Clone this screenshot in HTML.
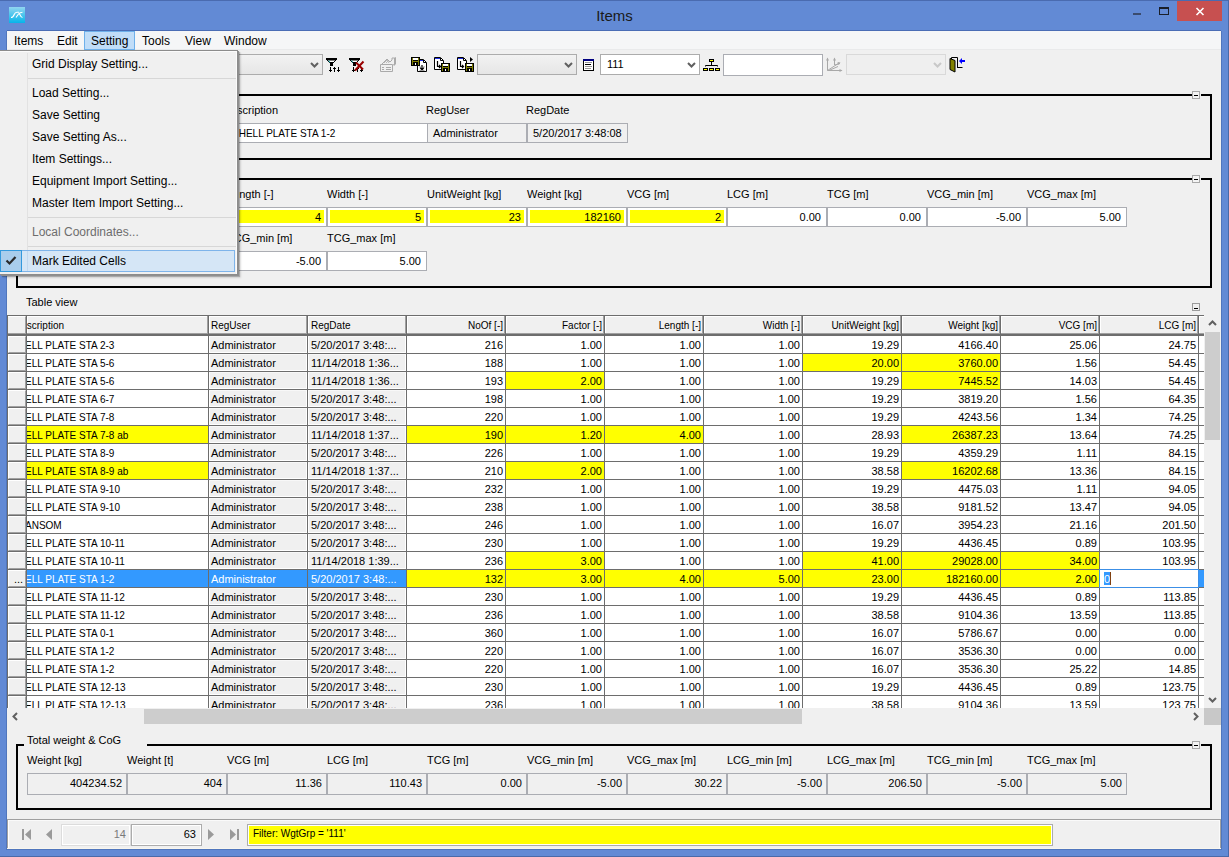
<!DOCTYPE html><html><head><meta charset="utf-8"><style>
html,body{margin:0;padding:0;}
body{width:1229px;height:857px;overflow:hidden;position:relative;background:#628ad5;font-family:"Liberation Sans", sans-serif;}
div{position:absolute;box-sizing:border-box;}
.t{white-space:pre;}
svg{position:absolute;}

</style></head><body>
<div style="left:0px;top:0px;width:1229px;height:1px;background:#4a6bb0"></div>
<div style="left:7px;top:31px;width:1214px;height:818px;background:#f0f0f0"></div>
<div style="left:9px;top:7px;width:16px;height:16px;background:linear-gradient(#92d5f0,#05b5ea)"></div>
<svg style="left:9px;top:7px" width="16" height="16" viewBox="0 0 16 16"><path d="M2 10.5 C4 10.5 4.5 9.5 5.2 7.5 C5.8 5.8 6.5 5.3 8 5.3 H10 M7 10.5 L9.5 7 C10.5 5.8 11.5 5.3 13.5 5.3 M10 6 C11 7.5 11.5 10.5 13.5 10.5" stroke="#fff" stroke-width="1.1" fill="none"/></svg>
<div class="t" style="left:0;width:1229px;top:5.6px;text-align:center;font-size:15px;line-height:20px;color:#1a1a1a">Items</div>
<div style="left:1133px;top:13px;width:8px;height:2px;background:#3a4b6e"></div>
<div style="left:1159px;top:7px;width:10px;height:8px;border:1px solid #1a1f2a;border-top-width:2px"></div>
<div style="left:1177px;top:1px;width:45px;height:20px;background:#c75050"></div>
<svg style="left:1177px;top:1px" width="45" height="20"><path d="M19.5 7 L26.5 14 M26.5 7 L19.5 14" stroke="#fff" stroke-width="1.6"/></svg>
<div style="left:7px;top:31px;width:1214px;height:19px;background:#f5f6f7"></div>
<div style="left:7px;top:30px;width:1214px;height:1px;background:#4a6db5"></div>
<div style="left:7px;top:49px;width:1214px;height:1px;background:#e9eaeb"></div>
<div style="left:84px;top:31px;width:51px;height:19px;background:#c0ddf8;border:1px solid #6eb0ea"></div>
<div class="t" style="left:14px;top:34.94px;font-size:12px;line-height:13.80px;color:#000;">Items</div>
<div class="t" style="left:57px;top:34.94px;font-size:12px;line-height:13.80px;color:#000;">Edit</div>
<div class="t" style="left:91px;top:34.94px;font-size:12px;line-height:13.80px;color:#000;">Setting</div>
<div class="t" style="left:142px;top:34.94px;font-size:12px;line-height:13.80px;color:#000;">Tools</div>
<div class="t" style="left:185px;top:34.94px;font-size:12px;line-height:13.80px;color:#000;">View</div>
<div class="t" style="left:224px;top:34.94px;font-size:12px;line-height:13.80px;color:#000;">Window</div>
<div style="left:150px;top:54px;width:173px;height:21px;background:linear-gradient(#f2f2f2,#e6e6e6);border:1px solid #acacac"></div>
<svg style="left:310px;top:62px" width="9" height="7"><path d="M1 1 L4.5 4.5 L8 1" stroke="#606060" stroke-width="2" fill="none"/></svg>
<svg style="left:326px;top:57px" width="16" height="16" viewBox="0 0 16 16"><path d="M0 1 H11 V3 H0 Z" fill="#000"/><path d="M1 3 L4.5 6.5 V8.5 H6.5 V6.5 L10 3 Z" fill="#fff" stroke="#000" stroke-width="1"/><path d="M2.5 3.5 L5 6.5" stroke="#3cc" stroke-width="1"/><rect x="4" y="5" width="3" height="4" fill="#000"/><rect x="4" y="10" width="1" height="3" fill="#000"/><rect x="3" y="13" width="3" height="1" fill="#000"/><rect x="4" y="14" width="1" height="1" fill="#000"/><rect x="8" y="10" width="1" height="1" fill="#000"/><rect x="7" y="11" width="3" height="1" fill="#000"/><rect x="8" y="12" width="1" height="3" fill="#000"/><rect x="12" y="10" width="1" height="3" fill="#000"/><rect x="11" y="13" width="3" height="1" fill="#000"/><rect x="12" y="14" width="1" height="1" fill="#000"/></svg>
<svg style="left:349px;top:57px" width="17" height="16" viewBox="0 0 17 16"><path d="M0 1 H11 V3 H0 Z" fill="#000"/><path d="M1 3 L4.5 6.5 V8.5 H6.5 V6.5 L10 3 Z" fill="#fff" stroke="#000" stroke-width="1"/><path d="M2.5 3.5 L5 6.5" stroke="#3cc" stroke-width="1"/><rect x="4" y="5" width="3" height="4" fill="#000"/><rect x="4" y="10" width="1" height="3" fill="#000"/><rect x="3" y="13" width="3" height="1" fill="#000"/><rect x="4" y="14" width="1" height="1" fill="#000"/><rect x="8" y="10" width="1" height="1" fill="#000"/><rect x="7" y="11" width="3" height="1" fill="#000"/><rect x="8" y="12" width="1" height="3" fill="#000"/><rect x="12" y="10" width="1" height="3" fill="#000"/><rect x="11" y="13" width="3" height="1" fill="#000"/><rect x="12" y="14" width="1" height="1" fill="#000"/><path d="M6 13.5 L14.5 4.5 M7 5.5 L14 12.5" stroke="#990000" stroke-width="2"/></svg>
<svg style="left:380px;top:57px" width="17" height="16" viewBox="0 0 17 16"><path d="M0.5 7.5 H12.5 V14.5 H0.5 Z" fill="#f0f0f0" stroke="#aaa"/><path d="M2 10.5 H4 M6 10.5 H11 M2 12.5 H4 M6 12.5 H11" stroke="#aaa"/><path d="M2 7 L7 2 L10 5 L12 3 V1 H14.5 V7 L12 9" stroke="#aaa" fill="none"/><path d="M4 6 L7 3 L9 6 M6 6 L8 4" stroke="#bbb" fill="none"/><path d="M14 1 L16 0 V7 L14 9 Z" fill="#aaa"/></svg>
<svg style="left:411px;top:57px" width="17" height="16"><path d="M6.5 2.5 H12.5 L15.5 5.5 V14.5 H6.5 Z" fill="#fff" stroke="#000"/><rect x="7" y="3" width="6" height="1" fill="#1f2fe0"/><path d="M12.5 3 V5.5 H15" stroke="#000" fill="none"/><rect x="0.5" y="0.5" width="8" height="8" fill="#808000" stroke="#000"/><rect x="2" y="1" width="5" height="2" fill="#fff"/><rect x="2" y="3" width="5" height="1" fill="#000"/><rect x="2" y="5" width="5" height="4" fill="#000"/><rect x="4" y="6" width="1" height="2" fill="#fff"/><path d="M11 8 V12 M9 10.5 L11 13 L13 10.5" stroke="#000" stroke-width="1.2" fill="none"/><path d="M8.5 9.5 H9.5 M12.5 9.5 H13.5 M8.5 13.5 H13.5" stroke="#999"/></svg>
<svg style="left:434px;top:57px" width="17" height="16"><path d="M0.5 0.5 H6.5 L9.5 3.5 V12.5 H0.5 Z" fill="#fff" stroke="#000"/><rect x="1" y="1" width="6" height="1" fill="#1f2fe0"/><path d="M6.5 1 V3.5 H9" stroke="#000" fill="none"/><path d="M3.5 4 V9.5 H6 M5 8 L6.5 9.5 L5 11" stroke="#000" stroke-width="1.2" fill="none"/><rect x="7.5" y="6.5" width="8" height="8" fill="#808000" stroke="#000"/><rect x="9" y="7" width="5" height="2" fill="#fff"/><rect x="9" y="9" width="5" height="1" fill="#000"/><rect x="9" y="11" width="5" height="4" fill="#000"/><rect x="11" y="12" width="1" height="2" fill="#fff"/></svg>
<svg style="left:457px;top:57px" width="17" height="16"><path d="M0.5 0.5 H6.5 L9.5 3.5 V12.5 H0.5 Z" fill="#fff" stroke="#000"/><rect x="1" y="1" width="6" height="1" fill="#1f2fe0"/><path d="M6.5 1 V3.5 H9" stroke="#000" fill="none"/><path d="M3.5 4 V9.5 H6 M5 8 L6.5 9.5 L5 11" stroke="#000" stroke-width="1.2" fill="none"/><rect x="8.5" y="6.5" width="8" height="8" fill="#808000" stroke="#000"/><rect x="10" y="7" width="5" height="2" fill="#fff"/><rect x="10" y="9" width="5" height="1" fill="#000"/><rect x="10" y="11" width="5" height="4" fill="#000"/><rect x="12" y="12" width="1" height="2" fill="#fff"/><path d="M13 0 L16 2.5 L13 5 Z" fill="#000"/></svg>
<div style="left:477px;top:54px;width:100px;height:21px;background:linear-gradient(#f2f2f2,#e6e6e6);border:1px solid #acacac"></div>
<svg style="left:564px;top:62px" width="9" height="7"><path d="M1 1 L4.5 4.5 L8 1" stroke="#606060" stroke-width="2" fill="none"/></svg>
<svg style="left:583px;top:59px" width="11" height="12"><rect x="0.5" y="0.5" width="10" height="11" fill="#fff" stroke="#000"/><rect x="0" y="0" width="11" height="2" fill="#000080"/><path d="M2 3.5 H9 M2 7.5 H9 M2 9.5 H8" stroke="#999"/><path d="M2 5.5 H8" stroke="#000"/></svg>
<div style="left:600px;top:54px;width:100px;height:21px;background:#fff;border:1px solid #acacac"></div>
<svg style="left:687px;top:62px" width="9" height="7"><path d="M1 1 L4.5 4.5 L8 1" stroke="#606060" stroke-width="2" fill="none"/></svg>
<div class="t" style="left:607px;top:57.86px;font-size:11px;line-height:12.65px;color:#000;">111</div>
<svg style="left:703px;top:59px" width="17" height="12"><rect x="6.5" y="0.5" width="4" height="2" fill="#ff0" stroke="#000"/><path d="M8.5 3 V6.5 M2.5 7.5 V6.5 H14.5 V7.5" stroke="#000" fill="none"/><rect x="0.5" y="9.5" width="4" height="2" fill="#ff0" stroke="#000"/><rect x="6.5" y="9.5" width="4" height="2" fill="#ff0" stroke="#000"/><rect x="12.5" y="9.5" width="4" height="2" fill="#ff0" stroke="#000"/></svg>
<div style="left:723px;top:54px;width:100px;height:22px;background:#fff;border:1px solid #abadb3"></div>
<svg style="left:826px;top:57px" width="17" height="16"><path d="M1.5 1.5 V13.5 H15.5 M8.5 1.5 V8 M1.5 13.5 L13 6 M4 13 L12 9.5 M9 8 L14 6.5" stroke="#a8a8a8" stroke-width="1" fill="none"/><path d="M0 3.5 L1.5 0.5 L3 3.5 Z M7 3.5 L8.5 0.5 L10 3.5 Z M13.5 12 L16.5 13.5 L13.5 15 Z M11.5 5 L14.5 5.5 L12.5 8 Z" fill="#a8a8a8"/></svg>
<div style="left:846px;top:54px;width:100px;height:21px;background:#efefef;border:1px solid #d9d9d9"></div>
<svg style="left:933px;top:62px" width="9" height="7"><path d="M1 1 L4.5 4.5 L8 1" stroke="#c8c8c8" stroke-width="2" fill="none"/></svg>
<svg style="left:949px;top:57px" width="17" height="16"><path d="M2.5 10.5 V0.5 H8.5 V10.5 M8 10.5 H13.5" fill="none" stroke="#000"/><path d="M1 1.5 L6 3.5 V15 L1 12.5 Z" fill="#808000" stroke="#000" stroke-width="1"/><path d="M10 4 L13 1 V3 H16 V5 H13 V7 Z" fill="#0000ff"/></svg>
<div style="left:16px;top:94px;width:2px;height:66px;background:#000"></div>
<div style="left:1210px;top:94px;width:2px;height:66px;background:#000"></div>
<div style="left:16px;top:158px;width:1196px;height:2px;background:#000"></div>
<div style="left:16px;top:94px;width:1176px;height:2px;background:#000"></div>
<div style="left:1201px;top:94px;width:11px;height:2px;background:#000"></div>
<div style="left:1192px;top:91px;width:8px;height:8px;background:#f4f4f4;border:1px solid #a8a8a8"></div>
<div style="left:1194px;top:95px;width:4px;height:1px;background:#000"></div>
<div class="t" style="left:223px;top:103.86px;font-size:11px;line-height:12.65px;color:#000;">Description</div>
<div class="t" style="left:426px;top:103.86px;font-size:11px;line-height:12.65px;color:#000;">RegUser</div>
<div class="t" style="left:526px;top:103.86px;font-size:11px;line-height:12.65px;color:#000;">RegDate</div>
<div style="left:200px;top:123px;width:228px;height:20px;background:#fff;border:1px solid #abadb3"></div>
<div class="t" style="left:232px;top:126.86px;font-size:11px;line-height:12.65px;color:#000;transform:scaleX(0.91);transform-origin:0 0">SHELL PLATE STA 1-2</div>
<div style="left:427px;top:123px;width:100px;height:20px;background:#f0f0f0;border:1px solid #abadb3"></div>
<div class="t" style="left:433px;top:126.86px;font-size:11px;line-height:12.65px;color:#000;">Administrator</div>
<div style="left:527px;top:123px;width:101px;height:20px;background:#f0f0f0;border:1px solid #abadb3"></div>
<div class="t" style="left:533px;top:126.86px;font-size:11px;line-height:12.65px;color:#000;">5/20/2017 3:48:08</div>
<div style="left:16px;top:178px;width:2px;height:110px;background:#000"></div>
<div style="left:1210px;top:178px;width:2px;height:110px;background:#000"></div>
<div style="left:16px;top:286px;width:1196px;height:2px;background:#000"></div>
<div style="left:16px;top:178px;width:1176px;height:2px;background:#000"></div>
<div style="left:1201px;top:178px;width:11px;height:2px;background:#000"></div>
<div style="left:1192px;top:175px;width:8px;height:8px;background:#f4f4f4;border:1px solid #a8a8a8"></div>
<div style="left:1194px;top:179px;width:4px;height:1px;background:#000"></div>
<div class="t" style="left:27px;top:187.86px;font-size:11px;line-height:12.65px;color:#000;">NoOf [-]</div>
<div style="left:27px;top:207px;width:100px;height:20px;background:#fff;border:1px solid #abadb3"></div>
<div style="left:30px;top:210px;width:94px;height:13px;background:#ff0"></div>
<div class="t" style="right:1108px;top:210.86px;font-size:11px;line-height:12.65px;color:#000;text-align:right;">132</div>
<div class="t" style="left:127px;top:187.86px;font-size:11px;line-height:12.65px;color:#000;">Factor [-]</div>
<div style="left:127px;top:207px;width:100px;height:20px;background:#fff;border:1px solid #abadb3"></div>
<div style="left:130px;top:210px;width:94px;height:13px;background:#ff0"></div>
<div class="t" style="right:1008px;top:210.86px;font-size:11px;line-height:12.65px;color:#000;text-align:right;">3</div>
<div class="t" style="left:227px;top:187.86px;font-size:11px;line-height:12.65px;color:#000;">Length [-]</div>
<div style="left:227px;top:207px;width:100px;height:20px;background:#fff;border:1px solid #abadb3"></div>
<div style="left:230px;top:210px;width:94px;height:13px;background:#ff0"></div>
<div class="t" style="right:908px;top:210.86px;font-size:11px;line-height:12.65px;color:#000;text-align:right;">4</div>
<div class="t" style="left:327px;top:187.86px;font-size:11px;line-height:12.65px;color:#000;">Width [-]</div>
<div style="left:327px;top:207px;width:100px;height:20px;background:#fff;border:1px solid #abadb3"></div>
<div style="left:330px;top:210px;width:94px;height:13px;background:#ff0"></div>
<div class="t" style="right:808px;top:210.86px;font-size:11px;line-height:12.65px;color:#000;text-align:right;">5</div>
<div class="t" style="left:427px;top:187.86px;font-size:11px;line-height:12.65px;color:#000;">UnitWeight [kg]</div>
<div style="left:427px;top:207px;width:100px;height:20px;background:#fff;border:1px solid #abadb3"></div>
<div style="left:430px;top:210px;width:94px;height:13px;background:#ff0"></div>
<div class="t" style="right:708px;top:210.86px;font-size:11px;line-height:12.65px;color:#000;text-align:right;">23</div>
<div class="t" style="left:527px;top:187.86px;font-size:11px;line-height:12.65px;color:#000;">Weight [kg]</div>
<div style="left:527px;top:207px;width:100px;height:20px;background:#fff;border:1px solid #abadb3"></div>
<div style="left:530px;top:210px;width:94px;height:13px;background:#ff0"></div>
<div class="t" style="right:608px;top:210.86px;font-size:11px;line-height:12.65px;color:#000;text-align:right;">182160</div>
<div class="t" style="left:627px;top:187.86px;font-size:11px;line-height:12.65px;color:#000;">VCG [m]</div>
<div style="left:627px;top:207px;width:100px;height:20px;background:#fff;border:1px solid #abadb3"></div>
<div style="left:630px;top:210px;width:94px;height:13px;background:#ff0"></div>
<div class="t" style="right:508px;top:210.86px;font-size:11px;line-height:12.65px;color:#000;text-align:right;">2</div>
<div class="t" style="left:727px;top:187.86px;font-size:11px;line-height:12.65px;color:#000;">LCG [m]</div>
<div style="left:727px;top:207px;width:100px;height:20px;background:#fff;border:1px solid #abadb3"></div>
<div class="t" style="right:408px;top:210.86px;font-size:11px;line-height:12.65px;color:#000;text-align:right;">0.00</div>
<div class="t" style="left:827px;top:187.86px;font-size:11px;line-height:12.65px;color:#000;">TCG [m]</div>
<div style="left:827px;top:207px;width:100px;height:20px;background:#fff;border:1px solid #abadb3"></div>
<div class="t" style="right:308px;top:210.86px;font-size:11px;line-height:12.65px;color:#000;text-align:right;">0.00</div>
<div class="t" style="left:927px;top:187.86px;font-size:11px;line-height:12.65px;color:#000;">VCG_min [m]</div>
<div style="left:927px;top:207px;width:100px;height:20px;background:#fff;border:1px solid #abadb3"></div>
<div class="t" style="right:208px;top:210.86px;font-size:11px;line-height:12.65px;color:#000;text-align:right;">-5.00</div>
<div class="t" style="left:1027px;top:187.86px;font-size:11px;line-height:12.65px;color:#000;">VCG_max [m]</div>
<div style="left:1027px;top:207px;width:100px;height:20px;background:#fff;border:1px solid #abadb3"></div>
<div class="t" style="right:108px;top:210.86px;font-size:11px;line-height:12.65px;color:#000;text-align:right;">5.00</div>
<div class="t" style="left:27px;top:231.86px;font-size:11px;line-height:12.65px;color:#000;">LCG_min [m]</div>
<div style="left:27px;top:251px;width:100px;height:20px;background:#fff;border:1px solid #abadb3"></div>
<div class="t" style="right:1108px;top:254.86px;font-size:11px;line-height:12.65px;color:#000;text-align:right;">-5.00</div>
<div class="t" style="left:127px;top:231.86px;font-size:11px;line-height:12.65px;color:#000;">LCG_max [m]</div>
<div style="left:127px;top:251px;width:100px;height:20px;background:#fff;border:1px solid #abadb3"></div>
<div class="t" style="right:1008px;top:254.86px;font-size:11px;line-height:12.65px;color:#000;text-align:right;">206.50</div>
<div class="t" style="left:227px;top:231.86px;font-size:11px;line-height:12.65px;color:#000;">TCG_min [m]</div>
<div style="left:227px;top:251px;width:100px;height:20px;background:#fff;border:1px solid #abadb3"></div>
<div class="t" style="right:908px;top:254.86px;font-size:11px;line-height:12.65px;color:#000;text-align:right;">-5.00</div>
<div class="t" style="left:327px;top:231.86px;font-size:11px;line-height:12.65px;color:#000;">TCG_max [m]</div>
<div style="left:327px;top:251px;width:100px;height:20px;background:#fff;border:1px solid #abadb3"></div>
<div class="t" style="right:808px;top:254.86px;font-size:11px;line-height:12.65px;color:#000;text-align:right;">5.00</div>
<div class="t" style="left:26px;top:295.86px;font-size:11px;line-height:12.65px;color:#000;">Table view</div>
<div style="left:1192px;top:303px;width:8px;height:8px;background:#f0f0f0;border:1px solid #9b9b9b"></div>
<div style="left:1194px;top:308px;width:4px;height:1px;background:#000"></div>
<div style="left:7px;top:315px;width:1197px;height:393px;overflow:hidden;background:#fff">
<div style="left:0px;top:0px;width:1197px;height:20px;background:#f0f0f0"></div>
<div style="left:0px;top:0px;width:1197px;height:1px;background:#6d6d6d"></div>
<div style="left:1px;top:1px;width:18px;height:1px;background:#fff"></div>
<div style="left:1px;top:1px;width:1px;height:17px;background:#fff"></div>
<div style="left:18px;top:1px;width:1px;height:17px;background:#a0a0a0"></div>
<div style="left:20px;top:1px;width:181px;height:1px;background:#fff"></div>
<div style="left:20px;top:1px;width:1px;height:17px;background:#fff"></div>
<div style="left:200px;top:1px;width:1px;height:17px;background:#a0a0a0"></div>
<div style="left:202px;top:1px;width:98px;height:1px;background:#fff"></div>
<div style="left:202px;top:1px;width:1px;height:17px;background:#fff"></div>
<div style="left:299px;top:1px;width:1px;height:17px;background:#a0a0a0"></div>
<div style="left:301px;top:1px;width:98px;height:1px;background:#fff"></div>
<div style="left:301px;top:1px;width:1px;height:17px;background:#fff"></div>
<div style="left:398px;top:1px;width:1px;height:17px;background:#a0a0a0"></div>
<div style="left:400px;top:1px;width:98px;height:1px;background:#fff"></div>
<div style="left:400px;top:1px;width:1px;height:17px;background:#fff"></div>
<div style="left:497px;top:1px;width:1px;height:17px;background:#a0a0a0"></div>
<div style="left:499px;top:1px;width:98px;height:1px;background:#fff"></div>
<div style="left:499px;top:1px;width:1px;height:17px;background:#fff"></div>
<div style="left:596px;top:1px;width:1px;height:17px;background:#a0a0a0"></div>
<div style="left:598px;top:1px;width:98px;height:1px;background:#fff"></div>
<div style="left:598px;top:1px;width:1px;height:17px;background:#fff"></div>
<div style="left:695px;top:1px;width:1px;height:17px;background:#a0a0a0"></div>
<div style="left:697px;top:1px;width:98px;height:1px;background:#fff"></div>
<div style="left:697px;top:1px;width:1px;height:17px;background:#fff"></div>
<div style="left:794px;top:1px;width:1px;height:17px;background:#a0a0a0"></div>
<div style="left:796px;top:1px;width:98px;height:1px;background:#fff"></div>
<div style="left:796px;top:1px;width:1px;height:17px;background:#fff"></div>
<div style="left:893px;top:1px;width:1px;height:17px;background:#a0a0a0"></div>
<div style="left:895px;top:1px;width:98px;height:1px;background:#fff"></div>
<div style="left:895px;top:1px;width:1px;height:17px;background:#fff"></div>
<div style="left:992px;top:1px;width:1px;height:17px;background:#a0a0a0"></div>
<div style="left:994px;top:1px;width:98px;height:1px;background:#fff"></div>
<div style="left:994px;top:1px;width:1px;height:17px;background:#fff"></div>
<div style="left:1091px;top:1px;width:1px;height:17px;background:#a0a0a0"></div>
<div style="left:1093px;top:1px;width:98px;height:1px;background:#fff"></div>
<div style="left:1093px;top:1px;width:1px;height:17px;background:#fff"></div>
<div style="left:1190px;top:1px;width:1px;height:17px;background:#a0a0a0"></div>
<div style="left:1192px;top:1px;width:12px;height:1px;background:#fff"></div>
<div style="left:1192px;top:1px;width:1px;height:17px;background:#fff"></div>
<div style="left:1203px;top:1px;width:1px;height:17px;background:#a0a0a0"></div>
<div style="left:0px;top:18px;width:1197px;height:1px;background:#a0a0a0"></div>
<div style="left:0px;top:19px;width:1197px;height:2px;background:#6d6d6d"></div>
<div style="left:19px;top:0px;width:1px;height:393px;background:#6d6d6d"></div>
<div style="left:201px;top:0px;width:1px;height:393px;background:#6d6d6d"></div>
<div style="left:300px;top:0px;width:1px;height:393px;background:#6d6d6d"></div>
<div style="left:399px;top:0px;width:1px;height:393px;background:#6d6d6d"></div>
<div style="left:498px;top:0px;width:1px;height:393px;background:#6d6d6d"></div>
<div style="left:597px;top:0px;width:1px;height:393px;background:#6d6d6d"></div>
<div style="left:696px;top:0px;width:1px;height:393px;background:#6d6d6d"></div>
<div style="left:795px;top:0px;width:1px;height:393px;background:#6d6d6d"></div>
<div style="left:894px;top:0px;width:1px;height:393px;background:#6d6d6d"></div>
<div style="left:993px;top:0px;width:1px;height:393px;background:#6d6d6d"></div>
<div style="left:1092px;top:0px;width:1px;height:393px;background:#6d6d6d"></div>
<div style="left:1191px;top:0px;width:1px;height:393px;background:#6d6d6d"></div>
<div style="left:0px;top:0px;width:1px;height:393px;background:#6d6d6d"></div>
<div class="t" style="left:204px;top:4.78px;font-size:10px;line-height:11.50px;color:#000;">RegUser</div>
<div class="t" style="left:304px;top:4.78px;font-size:10px;line-height:11.50px;color:#000;">RegDate</div>
<div class="t" style="right:701px;top:4.78px;font-size:10px;line-height:11.50px;color:#000;text-align:right;">NoOf [-]</div>
<div class="t" style="right:602px;top:4.78px;font-size:10px;line-height:11.50px;color:#000;text-align:right;">Factor [-]</div>
<div class="t" style="right:503px;top:4.78px;font-size:10px;line-height:11.50px;color:#000;text-align:right;">Length [-]</div>
<div class="t" style="right:404px;top:4.78px;font-size:10px;line-height:11.50px;color:#000;text-align:right;">Width [-]</div>
<div class="t" style="right:305px;top:4.78px;font-size:10px;line-height:11.50px;color:#000;text-align:right;">UnitWeight [kg]</div>
<div class="t" style="right:206px;top:4.78px;font-size:10px;line-height:11.50px;color:#000;text-align:right;">Weight [kg]</div>
<div class="t" style="right:107px;top:4.78px;font-size:10px;line-height:11.50px;color:#000;text-align:right;">VCG [m]</div>
<div class="t" style="right:8px;top:4.78px;font-size:10px;line-height:11.50px;color:#000;text-align:right;">LCG [m]</div>
<div class="t" style="left:7px;top:4.78px;font-size:10px;line-height:11.50px;color:#000;">Description</div>
<div style="left:0px;top:38px;width:1197px;height:1px;background:#6d6d6d"></div>
<div style="left:1px;top:21px;width:18px;height:17px;background:#f0f0f0;border-top:1px solid #fff;border-left:1px solid #fff"></div>
<div style="left:202px;top:21px;width:98px;height:17px;background:#f0f0f0;border:1px solid #fff;border-top-color:#f8f8f8"></div>
<div style="left:301px;top:21px;width:98px;height:17px;background:#f0f0f0;border:1px solid #fff;border-top-color:#f8f8f8"></div>
<div class="t" style="right:701px;top:23.86px;font-size:11px;line-height:12.65px;color:#000;text-align:right;">216</div>
<div class="t" style="right:602px;top:23.86px;font-size:11px;line-height:12.65px;color:#000;text-align:right;">1.00</div>
<div class="t" style="right:503px;top:23.86px;font-size:11px;line-height:12.65px;color:#000;text-align:right;">1.00</div>
<div class="t" style="right:404px;top:23.86px;font-size:11px;line-height:12.65px;color:#000;text-align:right;">1.00</div>
<div class="t" style="right:305px;top:23.86px;font-size:11px;line-height:12.65px;color:#000;text-align:right;">19.29</div>
<div class="t" style="right:206px;top:23.86px;font-size:11px;line-height:12.65px;color:#000;text-align:right;">4166.40</div>
<div class="t" style="right:107px;top:23.86px;font-size:11px;line-height:12.65px;color:#000;text-align:right;">25.06</div>
<div class="t" style="right:8px;top:23.86px;font-size:11px;line-height:12.65px;color:#000;text-align:right;">24.75</div>
<div class="t" style="left:18.2px;top:23.86px;font-size:11px;line-height:12.65px;color:#000;transform:scaleX(0.91);transform-origin:0 0">ELL PLATE STA 2-3</div>
<div class="t" style="left:204px;top:23.86px;font-size:11px;line-height:12.65px;color:#000;">Administrator</div>
<div class="t" style="left:304px;top:23.86px;font-size:11px;line-height:12.65px;color:#000;">5/20/2017 3:48:...</div>
<div style="left:0px;top:56px;width:1197px;height:1px;background:#6d6d6d"></div>
<div style="left:1px;top:39px;width:18px;height:17px;background:#f0f0f0;border-top:1px solid #fff;border-left:1px solid #fff"></div>
<div style="left:202px;top:39px;width:98px;height:17px;background:#f0f0f0;border:1px solid #fff;border-top-color:#f8f8f8"></div>
<div style="left:301px;top:39px;width:98px;height:17px;background:#f0f0f0;border:1px solid #fff;border-top-color:#f8f8f8"></div>
<div class="t" style="right:701px;top:41.86px;font-size:11px;line-height:12.65px;color:#000;text-align:right;">188</div>
<div class="t" style="right:602px;top:41.86px;font-size:11px;line-height:12.65px;color:#000;text-align:right;">1.00</div>
<div class="t" style="right:503px;top:41.86px;font-size:11px;line-height:12.65px;color:#000;text-align:right;">1.00</div>
<div class="t" style="right:404px;top:41.86px;font-size:11px;line-height:12.65px;color:#000;text-align:right;">1.00</div>
<div style="left:796px;top:39px;width:98px;height:17px;background:#ffff00"></div>
<div class="t" style="right:305px;top:41.86px;font-size:11px;line-height:12.65px;color:#000;text-align:right;">20.00</div>
<div style="left:895px;top:39px;width:98px;height:17px;background:#ffff00"></div>
<div class="t" style="right:206px;top:41.86px;font-size:11px;line-height:12.65px;color:#000;text-align:right;">3760.00</div>
<div class="t" style="right:107px;top:41.86px;font-size:11px;line-height:12.65px;color:#000;text-align:right;">1.56</div>
<div class="t" style="right:8px;top:41.86px;font-size:11px;line-height:12.65px;color:#000;text-align:right;">54.45</div>
<div class="t" style="left:18.2px;top:41.86px;font-size:11px;line-height:12.65px;color:#000;transform:scaleX(0.91);transform-origin:0 0">ELL PLATE STA 5-6</div>
<div class="t" style="left:204px;top:41.86px;font-size:11px;line-height:12.65px;color:#000;">Administrator</div>
<div class="t" style="left:304px;top:41.86px;font-size:11px;line-height:12.65px;color:#000;">11/14/2018 1:36...</div>
<div style="left:0px;top:74px;width:1197px;height:1px;background:#6d6d6d"></div>
<div style="left:1px;top:57px;width:18px;height:17px;background:#f0f0f0;border-top:1px solid #fff;border-left:1px solid #fff"></div>
<div style="left:202px;top:57px;width:98px;height:17px;background:#f0f0f0;border:1px solid #fff;border-top-color:#f8f8f8"></div>
<div style="left:301px;top:57px;width:98px;height:17px;background:#f0f0f0;border:1px solid #fff;border-top-color:#f8f8f8"></div>
<div class="t" style="right:701px;top:59.86px;font-size:11px;line-height:12.65px;color:#000;text-align:right;">193</div>
<div style="left:499px;top:57px;width:98px;height:17px;background:#ffff00"></div>
<div class="t" style="right:602px;top:59.86px;font-size:11px;line-height:12.65px;color:#000;text-align:right;">2.00</div>
<div class="t" style="right:503px;top:59.86px;font-size:11px;line-height:12.65px;color:#000;text-align:right;">1.00</div>
<div class="t" style="right:404px;top:59.86px;font-size:11px;line-height:12.65px;color:#000;text-align:right;">1.00</div>
<div class="t" style="right:305px;top:59.86px;font-size:11px;line-height:12.65px;color:#000;text-align:right;">19.29</div>
<div style="left:895px;top:57px;width:98px;height:17px;background:#ffff00"></div>
<div class="t" style="right:206px;top:59.86px;font-size:11px;line-height:12.65px;color:#000;text-align:right;">7445.52</div>
<div class="t" style="right:107px;top:59.86px;font-size:11px;line-height:12.65px;color:#000;text-align:right;">14.03</div>
<div class="t" style="right:8px;top:59.86px;font-size:11px;line-height:12.65px;color:#000;text-align:right;">54.45</div>
<div class="t" style="left:18.2px;top:59.86px;font-size:11px;line-height:12.65px;color:#000;transform:scaleX(0.91);transform-origin:0 0">ELL PLATE STA 5-6</div>
<div class="t" style="left:204px;top:59.86px;font-size:11px;line-height:12.65px;color:#000;">Administrator</div>
<div class="t" style="left:304px;top:59.86px;font-size:11px;line-height:12.65px;color:#000;">11/14/2018 1:36...</div>
<div style="left:0px;top:92px;width:1197px;height:1px;background:#6d6d6d"></div>
<div style="left:1px;top:75px;width:18px;height:17px;background:#f0f0f0;border-top:1px solid #fff;border-left:1px solid #fff"></div>
<div style="left:202px;top:75px;width:98px;height:17px;background:#f0f0f0;border:1px solid #fff;border-top-color:#f8f8f8"></div>
<div style="left:301px;top:75px;width:98px;height:17px;background:#f0f0f0;border:1px solid #fff;border-top-color:#f8f8f8"></div>
<div class="t" style="right:701px;top:77.86px;font-size:11px;line-height:12.65px;color:#000;text-align:right;">198</div>
<div class="t" style="right:602px;top:77.86px;font-size:11px;line-height:12.65px;color:#000;text-align:right;">1.00</div>
<div class="t" style="right:503px;top:77.86px;font-size:11px;line-height:12.65px;color:#000;text-align:right;">1.00</div>
<div class="t" style="right:404px;top:77.86px;font-size:11px;line-height:12.65px;color:#000;text-align:right;">1.00</div>
<div class="t" style="right:305px;top:77.86px;font-size:11px;line-height:12.65px;color:#000;text-align:right;">19.29</div>
<div class="t" style="right:206px;top:77.86px;font-size:11px;line-height:12.65px;color:#000;text-align:right;">3819.20</div>
<div class="t" style="right:107px;top:77.86px;font-size:11px;line-height:12.65px;color:#000;text-align:right;">1.56</div>
<div class="t" style="right:8px;top:77.86px;font-size:11px;line-height:12.65px;color:#000;text-align:right;">64.35</div>
<div class="t" style="left:18.2px;top:77.86px;font-size:11px;line-height:12.65px;color:#000;transform:scaleX(0.91);transform-origin:0 0">ELL PLATE STA 6-7</div>
<div class="t" style="left:204px;top:77.86px;font-size:11px;line-height:12.65px;color:#000;">Administrator</div>
<div class="t" style="left:304px;top:77.86px;font-size:11px;line-height:12.65px;color:#000;">5/20/2017 3:48:...</div>
<div style="left:0px;top:110px;width:1197px;height:1px;background:#6d6d6d"></div>
<div style="left:1px;top:93px;width:18px;height:17px;background:#f0f0f0;border-top:1px solid #fff;border-left:1px solid #fff"></div>
<div style="left:202px;top:93px;width:98px;height:17px;background:#f0f0f0;border:1px solid #fff;border-top-color:#f8f8f8"></div>
<div style="left:301px;top:93px;width:98px;height:17px;background:#f0f0f0;border:1px solid #fff;border-top-color:#f8f8f8"></div>
<div class="t" style="right:701px;top:95.86px;font-size:11px;line-height:12.65px;color:#000;text-align:right;">220</div>
<div class="t" style="right:602px;top:95.86px;font-size:11px;line-height:12.65px;color:#000;text-align:right;">1.00</div>
<div class="t" style="right:503px;top:95.86px;font-size:11px;line-height:12.65px;color:#000;text-align:right;">1.00</div>
<div class="t" style="right:404px;top:95.86px;font-size:11px;line-height:12.65px;color:#000;text-align:right;">1.00</div>
<div class="t" style="right:305px;top:95.86px;font-size:11px;line-height:12.65px;color:#000;text-align:right;">19.29</div>
<div class="t" style="right:206px;top:95.86px;font-size:11px;line-height:12.65px;color:#000;text-align:right;">4243.56</div>
<div class="t" style="right:107px;top:95.86px;font-size:11px;line-height:12.65px;color:#000;text-align:right;">1.34</div>
<div class="t" style="right:8px;top:95.86px;font-size:11px;line-height:12.65px;color:#000;text-align:right;">74.25</div>
<div class="t" style="left:18.2px;top:95.86px;font-size:11px;line-height:12.65px;color:#000;transform:scaleX(0.91);transform-origin:0 0">ELL PLATE STA 7-8</div>
<div class="t" style="left:204px;top:95.86px;font-size:11px;line-height:12.65px;color:#000;">Administrator</div>
<div class="t" style="left:304px;top:95.86px;font-size:11px;line-height:12.65px;color:#000;">5/20/2017 3:48:...</div>
<div style="left:0px;top:128px;width:1197px;height:1px;background:#6d6d6d"></div>
<div style="left:1px;top:111px;width:18px;height:17px;background:#f0f0f0;border-top:1px solid #fff;border-left:1px solid #fff"></div>
<div style="left:20px;top:111px;width:181px;height:17px;background:#ffff00"></div>
<div style="left:202px;top:111px;width:98px;height:17px;background:#f0f0f0;border:1px solid #fff;border-top-color:#f8f8f8"></div>
<div style="left:301px;top:111px;width:98px;height:17px;background:#f0f0f0;border:1px solid #fff;border-top-color:#f8f8f8"></div>
<div style="left:400px;top:111px;width:98px;height:17px;background:#ffff00"></div>
<div class="t" style="right:701px;top:113.86px;font-size:11px;line-height:12.65px;color:#000;text-align:right;">190</div>
<div style="left:499px;top:111px;width:98px;height:17px;background:#ffff00"></div>
<div class="t" style="right:602px;top:113.86px;font-size:11px;line-height:12.65px;color:#000;text-align:right;">1.20</div>
<div style="left:598px;top:111px;width:98px;height:17px;background:#ffff00"></div>
<div class="t" style="right:503px;top:113.86px;font-size:11px;line-height:12.65px;color:#000;text-align:right;">4.00</div>
<div class="t" style="right:404px;top:113.86px;font-size:11px;line-height:12.65px;color:#000;text-align:right;">1.00</div>
<div class="t" style="right:305px;top:113.86px;font-size:11px;line-height:12.65px;color:#000;text-align:right;">28.93</div>
<div style="left:895px;top:111px;width:98px;height:17px;background:#ffff00"></div>
<div class="t" style="right:206px;top:113.86px;font-size:11px;line-height:12.65px;color:#000;text-align:right;">26387.23</div>
<div class="t" style="right:107px;top:113.86px;font-size:11px;line-height:12.65px;color:#000;text-align:right;">13.64</div>
<div class="t" style="right:8px;top:113.86px;font-size:11px;line-height:12.65px;color:#000;text-align:right;">74.25</div>
<div class="t" style="left:18.2px;top:113.86px;font-size:11px;line-height:12.65px;color:#000;transform:scaleX(0.91);transform-origin:0 0">ELL PLATE STA 7-8 ab</div>
<div class="t" style="left:204px;top:113.86px;font-size:11px;line-height:12.65px;color:#000;">Administrator</div>
<div class="t" style="left:304px;top:113.86px;font-size:11px;line-height:12.65px;color:#000;">11/14/2018 1:37...</div>
<div style="left:0px;top:146px;width:1197px;height:1px;background:#6d6d6d"></div>
<div style="left:1px;top:129px;width:18px;height:17px;background:#f0f0f0;border-top:1px solid #fff;border-left:1px solid #fff"></div>
<div style="left:202px;top:129px;width:98px;height:17px;background:#f0f0f0;border:1px solid #fff;border-top-color:#f8f8f8"></div>
<div style="left:301px;top:129px;width:98px;height:17px;background:#f0f0f0;border:1px solid #fff;border-top-color:#f8f8f8"></div>
<div class="t" style="right:701px;top:131.86px;font-size:11px;line-height:12.65px;color:#000;text-align:right;">226</div>
<div class="t" style="right:602px;top:131.86px;font-size:11px;line-height:12.65px;color:#000;text-align:right;">1.00</div>
<div class="t" style="right:503px;top:131.86px;font-size:11px;line-height:12.65px;color:#000;text-align:right;">1.00</div>
<div class="t" style="right:404px;top:131.86px;font-size:11px;line-height:12.65px;color:#000;text-align:right;">1.00</div>
<div class="t" style="right:305px;top:131.86px;font-size:11px;line-height:12.65px;color:#000;text-align:right;">19.29</div>
<div class="t" style="right:206px;top:131.86px;font-size:11px;line-height:12.65px;color:#000;text-align:right;">4359.29</div>
<div class="t" style="right:107px;top:131.86px;font-size:11px;line-height:12.65px;color:#000;text-align:right;">1.11</div>
<div class="t" style="right:8px;top:131.86px;font-size:11px;line-height:12.65px;color:#000;text-align:right;">84.15</div>
<div class="t" style="left:18.2px;top:131.86px;font-size:11px;line-height:12.65px;color:#000;transform:scaleX(0.91);transform-origin:0 0">ELL PLATE STA 8-9</div>
<div class="t" style="left:204px;top:131.86px;font-size:11px;line-height:12.65px;color:#000;">Administrator</div>
<div class="t" style="left:304px;top:131.86px;font-size:11px;line-height:12.65px;color:#000;">5/20/2017 3:48:...</div>
<div style="left:0px;top:164px;width:1197px;height:1px;background:#6d6d6d"></div>
<div style="left:1px;top:147px;width:18px;height:17px;background:#f0f0f0;border-top:1px solid #fff;border-left:1px solid #fff"></div>
<div style="left:20px;top:147px;width:181px;height:17px;background:#ffff00"></div>
<div style="left:202px;top:147px;width:98px;height:17px;background:#f0f0f0;border:1px solid #fff;border-top-color:#f8f8f8"></div>
<div style="left:301px;top:147px;width:98px;height:17px;background:#f0f0f0;border:1px solid #fff;border-top-color:#f8f8f8"></div>
<div class="t" style="right:701px;top:149.86px;font-size:11px;line-height:12.65px;color:#000;text-align:right;">210</div>
<div style="left:499px;top:147px;width:98px;height:17px;background:#ffff00"></div>
<div class="t" style="right:602px;top:149.86px;font-size:11px;line-height:12.65px;color:#000;text-align:right;">2.00</div>
<div class="t" style="right:503px;top:149.86px;font-size:11px;line-height:12.65px;color:#000;text-align:right;">1.00</div>
<div class="t" style="right:404px;top:149.86px;font-size:11px;line-height:12.65px;color:#000;text-align:right;">1.00</div>
<div class="t" style="right:305px;top:149.86px;font-size:11px;line-height:12.65px;color:#000;text-align:right;">38.58</div>
<div style="left:895px;top:147px;width:98px;height:17px;background:#ffff00"></div>
<div class="t" style="right:206px;top:149.86px;font-size:11px;line-height:12.65px;color:#000;text-align:right;">16202.68</div>
<div class="t" style="right:107px;top:149.86px;font-size:11px;line-height:12.65px;color:#000;text-align:right;">13.36</div>
<div class="t" style="right:8px;top:149.86px;font-size:11px;line-height:12.65px;color:#000;text-align:right;">84.15</div>
<div class="t" style="left:18.2px;top:149.86px;font-size:11px;line-height:12.65px;color:#000;transform:scaleX(0.91);transform-origin:0 0">ELL PLATE STA 8-9 ab</div>
<div class="t" style="left:204px;top:149.86px;font-size:11px;line-height:12.65px;color:#000;">Administrator</div>
<div class="t" style="left:304px;top:149.86px;font-size:11px;line-height:12.65px;color:#000;">11/14/2018 1:37...</div>
<div style="left:0px;top:182px;width:1197px;height:1px;background:#6d6d6d"></div>
<div style="left:1px;top:165px;width:18px;height:17px;background:#f0f0f0;border-top:1px solid #fff;border-left:1px solid #fff"></div>
<div style="left:202px;top:165px;width:98px;height:17px;background:#f0f0f0;border:1px solid #fff;border-top-color:#f8f8f8"></div>
<div style="left:301px;top:165px;width:98px;height:17px;background:#f0f0f0;border:1px solid #fff;border-top-color:#f8f8f8"></div>
<div class="t" style="right:701px;top:167.86px;font-size:11px;line-height:12.65px;color:#000;text-align:right;">232</div>
<div class="t" style="right:602px;top:167.86px;font-size:11px;line-height:12.65px;color:#000;text-align:right;">1.00</div>
<div class="t" style="right:503px;top:167.86px;font-size:11px;line-height:12.65px;color:#000;text-align:right;">1.00</div>
<div class="t" style="right:404px;top:167.86px;font-size:11px;line-height:12.65px;color:#000;text-align:right;">1.00</div>
<div class="t" style="right:305px;top:167.86px;font-size:11px;line-height:12.65px;color:#000;text-align:right;">19.29</div>
<div class="t" style="right:206px;top:167.86px;font-size:11px;line-height:12.65px;color:#000;text-align:right;">4475.03</div>
<div class="t" style="right:107px;top:167.86px;font-size:11px;line-height:12.65px;color:#000;text-align:right;">1.11</div>
<div class="t" style="right:8px;top:167.86px;font-size:11px;line-height:12.65px;color:#000;text-align:right;">94.05</div>
<div class="t" style="left:18.2px;top:167.86px;font-size:11px;line-height:12.65px;color:#000;transform:scaleX(0.91);transform-origin:0 0">ELL PLATE STA 9-10</div>
<div class="t" style="left:204px;top:167.86px;font-size:11px;line-height:12.65px;color:#000;">Administrator</div>
<div class="t" style="left:304px;top:167.86px;font-size:11px;line-height:12.65px;color:#000;">5/20/2017 3:48:...</div>
<div style="left:0px;top:200px;width:1197px;height:1px;background:#6d6d6d"></div>
<div style="left:1px;top:183px;width:18px;height:17px;background:#f0f0f0;border-top:1px solid #fff;border-left:1px solid #fff"></div>
<div style="left:202px;top:183px;width:98px;height:17px;background:#f0f0f0;border:1px solid #fff;border-top-color:#f8f8f8"></div>
<div style="left:301px;top:183px;width:98px;height:17px;background:#f0f0f0;border:1px solid #fff;border-top-color:#f8f8f8"></div>
<div class="t" style="right:701px;top:185.86px;font-size:11px;line-height:12.65px;color:#000;text-align:right;">238</div>
<div class="t" style="right:602px;top:185.86px;font-size:11px;line-height:12.65px;color:#000;text-align:right;">1.00</div>
<div class="t" style="right:503px;top:185.86px;font-size:11px;line-height:12.65px;color:#000;text-align:right;">1.00</div>
<div class="t" style="right:404px;top:185.86px;font-size:11px;line-height:12.65px;color:#000;text-align:right;">1.00</div>
<div class="t" style="right:305px;top:185.86px;font-size:11px;line-height:12.65px;color:#000;text-align:right;">38.58</div>
<div class="t" style="right:206px;top:185.86px;font-size:11px;line-height:12.65px;color:#000;text-align:right;">9181.52</div>
<div class="t" style="right:107px;top:185.86px;font-size:11px;line-height:12.65px;color:#000;text-align:right;">13.47</div>
<div class="t" style="right:8px;top:185.86px;font-size:11px;line-height:12.65px;color:#000;text-align:right;">94.05</div>
<div class="t" style="left:18.2px;top:185.86px;font-size:11px;line-height:12.65px;color:#000;transform:scaleX(0.91);transform-origin:0 0">ELL PLATE STA 9-10</div>
<div class="t" style="left:204px;top:185.86px;font-size:11px;line-height:12.65px;color:#000;">Administrator</div>
<div class="t" style="left:304px;top:185.86px;font-size:11px;line-height:12.65px;color:#000;">5/20/2017 3:48:...</div>
<div style="left:0px;top:218px;width:1197px;height:1px;background:#6d6d6d"></div>
<div style="left:1px;top:201px;width:18px;height:17px;background:#f0f0f0;border-top:1px solid #fff;border-left:1px solid #fff"></div>
<div style="left:202px;top:201px;width:98px;height:17px;background:#f0f0f0;border:1px solid #fff;border-top-color:#f8f8f8"></div>
<div style="left:301px;top:201px;width:98px;height:17px;background:#f0f0f0;border:1px solid #fff;border-top-color:#f8f8f8"></div>
<div class="t" style="right:701px;top:203.86px;font-size:11px;line-height:12.65px;color:#000;text-align:right;">246</div>
<div class="t" style="right:602px;top:203.86px;font-size:11px;line-height:12.65px;color:#000;text-align:right;">1.00</div>
<div class="t" style="right:503px;top:203.86px;font-size:11px;line-height:12.65px;color:#000;text-align:right;">1.00</div>
<div class="t" style="right:404px;top:203.86px;font-size:11px;line-height:12.65px;color:#000;text-align:right;">1.00</div>
<div class="t" style="right:305px;top:203.86px;font-size:11px;line-height:12.65px;color:#000;text-align:right;">16.07</div>
<div class="t" style="right:206px;top:203.86px;font-size:11px;line-height:12.65px;color:#000;text-align:right;">3954.23</div>
<div class="t" style="right:107px;top:203.86px;font-size:11px;line-height:12.65px;color:#000;text-align:right;">21.16</div>
<div class="t" style="right:8px;top:203.86px;font-size:11px;line-height:12.65px;color:#000;text-align:right;">201.50</div>
<div class="t" style="left:18.2px;top:203.86px;font-size:11px;line-height:12.65px;color:#000;transform:scaleX(0.91);transform-origin:0 0">ANSOM</div>
<div class="t" style="left:204px;top:203.86px;font-size:11px;line-height:12.65px;color:#000;">Administrator</div>
<div class="t" style="left:304px;top:203.86px;font-size:11px;line-height:12.65px;color:#000;">5/20/2017 3:48:...</div>
<div style="left:0px;top:236px;width:1197px;height:1px;background:#6d6d6d"></div>
<div style="left:1px;top:219px;width:18px;height:17px;background:#f0f0f0;border-top:1px solid #fff;border-left:1px solid #fff"></div>
<div style="left:202px;top:219px;width:98px;height:17px;background:#f0f0f0;border:1px solid #fff;border-top-color:#f8f8f8"></div>
<div style="left:301px;top:219px;width:98px;height:17px;background:#f0f0f0;border:1px solid #fff;border-top-color:#f8f8f8"></div>
<div class="t" style="right:701px;top:221.86px;font-size:11px;line-height:12.65px;color:#000;text-align:right;">230</div>
<div class="t" style="right:602px;top:221.86px;font-size:11px;line-height:12.65px;color:#000;text-align:right;">1.00</div>
<div class="t" style="right:503px;top:221.86px;font-size:11px;line-height:12.65px;color:#000;text-align:right;">1.00</div>
<div class="t" style="right:404px;top:221.86px;font-size:11px;line-height:12.65px;color:#000;text-align:right;">1.00</div>
<div class="t" style="right:305px;top:221.86px;font-size:11px;line-height:12.65px;color:#000;text-align:right;">19.29</div>
<div class="t" style="right:206px;top:221.86px;font-size:11px;line-height:12.65px;color:#000;text-align:right;">4436.45</div>
<div class="t" style="right:107px;top:221.86px;font-size:11px;line-height:12.65px;color:#000;text-align:right;">0.89</div>
<div class="t" style="right:8px;top:221.86px;font-size:11px;line-height:12.65px;color:#000;text-align:right;">103.95</div>
<div class="t" style="left:18.2px;top:221.86px;font-size:11px;line-height:12.65px;color:#000;transform:scaleX(0.91);transform-origin:0 0">ELL PLATE STA 10-11</div>
<div class="t" style="left:204px;top:221.86px;font-size:11px;line-height:12.65px;color:#000;">Administrator</div>
<div class="t" style="left:304px;top:221.86px;font-size:11px;line-height:12.65px;color:#000;">5/20/2017 3:48:...</div>
<div style="left:0px;top:254px;width:1197px;height:1px;background:#6d6d6d"></div>
<div style="left:1px;top:237px;width:18px;height:17px;background:#f0f0f0;border-top:1px solid #fff;border-left:1px solid #fff"></div>
<div style="left:202px;top:237px;width:98px;height:17px;background:#f0f0f0;border:1px solid #fff;border-top-color:#f8f8f8"></div>
<div style="left:301px;top:237px;width:98px;height:17px;background:#f0f0f0;border:1px solid #fff;border-top-color:#f8f8f8"></div>
<div class="t" style="right:701px;top:239.86px;font-size:11px;line-height:12.65px;color:#000;text-align:right;">236</div>
<div style="left:499px;top:237px;width:98px;height:17px;background:#ffff00"></div>
<div class="t" style="right:602px;top:239.86px;font-size:11px;line-height:12.65px;color:#000;text-align:right;">3.00</div>
<div class="t" style="right:503px;top:239.86px;font-size:11px;line-height:12.65px;color:#000;text-align:right;">1.00</div>
<div class="t" style="right:404px;top:239.86px;font-size:11px;line-height:12.65px;color:#000;text-align:right;">1.00</div>
<div style="left:796px;top:237px;width:98px;height:17px;background:#ffff00"></div>
<div class="t" style="right:305px;top:239.86px;font-size:11px;line-height:12.65px;color:#000;text-align:right;">41.00</div>
<div style="left:895px;top:237px;width:98px;height:17px;background:#ffff00"></div>
<div class="t" style="right:206px;top:239.86px;font-size:11px;line-height:12.65px;color:#000;text-align:right;">29028.00</div>
<div style="left:994px;top:237px;width:98px;height:17px;background:#ffff00"></div>
<div class="t" style="right:107px;top:239.86px;font-size:11px;line-height:12.65px;color:#000;text-align:right;">34.00</div>
<div class="t" style="right:8px;top:239.86px;font-size:11px;line-height:12.65px;color:#000;text-align:right;">103.95</div>
<div class="t" style="left:18.2px;top:239.86px;font-size:11px;line-height:12.65px;color:#000;transform:scaleX(0.91);transform-origin:0 0">ELL PLATE STA 10-11</div>
<div class="t" style="left:204px;top:239.86px;font-size:11px;line-height:12.65px;color:#000;">Administrator</div>
<div class="t" style="left:304px;top:239.86px;font-size:11px;line-height:12.65px;color:#000;">11/14/2018 1:39...</div>
<div style="left:0px;top:272px;width:1197px;height:1px;background:#6d6d6d"></div>
<div style="left:1px;top:255px;width:18px;height:17px;background:#f0f0f0;border-top:1px solid #fff;border-left:1px solid #fff"></div>
<div style="left:20px;top:255px;width:181px;height:17px;background:#3399ff"></div>
<div style="left:202px;top:255px;width:98px;height:17px;background:#3399ff"></div>
<div style="left:301px;top:255px;width:98px;height:17px;background:#3399ff"></div>
<div style="left:400px;top:255px;width:98px;height:17px;background:#ffff00"></div>
<div class="t" style="right:701px;top:257.86px;font-size:11px;line-height:12.65px;color:#000;text-align:right;">132</div>
<div style="left:499px;top:255px;width:98px;height:17px;background:#ffff00"></div>
<div class="t" style="right:602px;top:257.86px;font-size:11px;line-height:12.65px;color:#000;text-align:right;">3.00</div>
<div style="left:598px;top:255px;width:98px;height:17px;background:#ffff00"></div>
<div class="t" style="right:503px;top:257.86px;font-size:11px;line-height:12.65px;color:#000;text-align:right;">4.00</div>
<div style="left:697px;top:255px;width:98px;height:17px;background:#ffff00"></div>
<div class="t" style="right:404px;top:257.86px;font-size:11px;line-height:12.65px;color:#000;text-align:right;">5.00</div>
<div style="left:796px;top:255px;width:98px;height:17px;background:#ffff00"></div>
<div class="t" style="right:305px;top:257.86px;font-size:11px;line-height:12.65px;color:#000;text-align:right;">23.00</div>
<div style="left:895px;top:255px;width:98px;height:17px;background:#ffff00"></div>
<div class="t" style="right:206px;top:257.86px;font-size:11px;line-height:12.65px;color:#000;text-align:right;">182160.00</div>
<div style="left:994px;top:255px;width:98px;height:17px;background:#ffff00"></div>
<div class="t" style="right:107px;top:257.86px;font-size:11px;line-height:12.65px;color:#000;text-align:right;">2.00</div>
<div class="t" style="left:18.2px;top:257.86px;font-size:11px;line-height:12.65px;color:#fff;transform:scaleX(0.91);transform-origin:0 0">ELL PLATE STA 1-2</div>
<div class="t" style="left:204px;top:257.86px;font-size:11px;line-height:12.65px;color:#fff;">Administrator</div>
<div class="t" style="left:304px;top:257.86px;font-size:11px;line-height:12.65px;color:#fff;">5/20/2017 3:48:...</div>
<div style="left:0px;top:290px;width:1197px;height:1px;background:#6d6d6d"></div>
<div style="left:1px;top:273px;width:18px;height:17px;background:#f0f0f0;border-top:1px solid #fff;border-left:1px solid #fff"></div>
<div style="left:202px;top:273px;width:98px;height:17px;background:#f0f0f0;border:1px solid #fff;border-top-color:#f8f8f8"></div>
<div style="left:301px;top:273px;width:98px;height:17px;background:#f0f0f0;border:1px solid #fff;border-top-color:#f8f8f8"></div>
<div class="t" style="right:701px;top:275.86px;font-size:11px;line-height:12.65px;color:#000;text-align:right;">230</div>
<div class="t" style="right:602px;top:275.86px;font-size:11px;line-height:12.65px;color:#000;text-align:right;">1.00</div>
<div class="t" style="right:503px;top:275.86px;font-size:11px;line-height:12.65px;color:#000;text-align:right;">1.00</div>
<div class="t" style="right:404px;top:275.86px;font-size:11px;line-height:12.65px;color:#000;text-align:right;">1.00</div>
<div class="t" style="right:305px;top:275.86px;font-size:11px;line-height:12.65px;color:#000;text-align:right;">19.29</div>
<div class="t" style="right:206px;top:275.86px;font-size:11px;line-height:12.65px;color:#000;text-align:right;">4436.45</div>
<div class="t" style="right:107px;top:275.86px;font-size:11px;line-height:12.65px;color:#000;text-align:right;">0.89</div>
<div class="t" style="right:8px;top:275.86px;font-size:11px;line-height:12.65px;color:#000;text-align:right;">113.85</div>
<div class="t" style="left:18.2px;top:275.86px;font-size:11px;line-height:12.65px;color:#000;transform:scaleX(0.91);transform-origin:0 0">ELL PLATE STA 11-12</div>
<div class="t" style="left:204px;top:275.86px;font-size:11px;line-height:12.65px;color:#000;">Administrator</div>
<div class="t" style="left:304px;top:275.86px;font-size:11px;line-height:12.65px;color:#000;">5/20/2017 3:48:...</div>
<div style="left:0px;top:308px;width:1197px;height:1px;background:#6d6d6d"></div>
<div style="left:1px;top:291px;width:18px;height:17px;background:#f0f0f0;border-top:1px solid #fff;border-left:1px solid #fff"></div>
<div style="left:202px;top:291px;width:98px;height:17px;background:#f0f0f0;border:1px solid #fff;border-top-color:#f8f8f8"></div>
<div style="left:301px;top:291px;width:98px;height:17px;background:#f0f0f0;border:1px solid #fff;border-top-color:#f8f8f8"></div>
<div class="t" style="right:701px;top:293.86px;font-size:11px;line-height:12.65px;color:#000;text-align:right;">236</div>
<div class="t" style="right:602px;top:293.86px;font-size:11px;line-height:12.65px;color:#000;text-align:right;">1.00</div>
<div class="t" style="right:503px;top:293.86px;font-size:11px;line-height:12.65px;color:#000;text-align:right;">1.00</div>
<div class="t" style="right:404px;top:293.86px;font-size:11px;line-height:12.65px;color:#000;text-align:right;">1.00</div>
<div class="t" style="right:305px;top:293.86px;font-size:11px;line-height:12.65px;color:#000;text-align:right;">38.58</div>
<div class="t" style="right:206px;top:293.86px;font-size:11px;line-height:12.65px;color:#000;text-align:right;">9104.36</div>
<div class="t" style="right:107px;top:293.86px;font-size:11px;line-height:12.65px;color:#000;text-align:right;">13.59</div>
<div class="t" style="right:8px;top:293.86px;font-size:11px;line-height:12.65px;color:#000;text-align:right;">113.85</div>
<div class="t" style="left:18.2px;top:293.86px;font-size:11px;line-height:12.65px;color:#000;transform:scaleX(0.91);transform-origin:0 0">ELL PLATE STA 11-12</div>
<div class="t" style="left:204px;top:293.86px;font-size:11px;line-height:12.65px;color:#000;">Administrator</div>
<div class="t" style="left:304px;top:293.86px;font-size:11px;line-height:12.65px;color:#000;">5/20/2017 3:48:...</div>
<div style="left:0px;top:326px;width:1197px;height:1px;background:#6d6d6d"></div>
<div style="left:1px;top:309px;width:18px;height:17px;background:#f0f0f0;border-top:1px solid #fff;border-left:1px solid #fff"></div>
<div style="left:202px;top:309px;width:98px;height:17px;background:#f0f0f0;border:1px solid #fff;border-top-color:#f8f8f8"></div>
<div style="left:301px;top:309px;width:98px;height:17px;background:#f0f0f0;border:1px solid #fff;border-top-color:#f8f8f8"></div>
<div class="t" style="right:701px;top:311.86px;font-size:11px;line-height:12.65px;color:#000;text-align:right;">360</div>
<div class="t" style="right:602px;top:311.86px;font-size:11px;line-height:12.65px;color:#000;text-align:right;">1.00</div>
<div class="t" style="right:503px;top:311.86px;font-size:11px;line-height:12.65px;color:#000;text-align:right;">1.00</div>
<div class="t" style="right:404px;top:311.86px;font-size:11px;line-height:12.65px;color:#000;text-align:right;">1.00</div>
<div class="t" style="right:305px;top:311.86px;font-size:11px;line-height:12.65px;color:#000;text-align:right;">16.07</div>
<div class="t" style="right:206px;top:311.86px;font-size:11px;line-height:12.65px;color:#000;text-align:right;">5786.67</div>
<div class="t" style="right:107px;top:311.86px;font-size:11px;line-height:12.65px;color:#000;text-align:right;">0.00</div>
<div class="t" style="right:8px;top:311.86px;font-size:11px;line-height:12.65px;color:#000;text-align:right;">0.00</div>
<div class="t" style="left:18.2px;top:311.86px;font-size:11px;line-height:12.65px;color:#000;transform:scaleX(0.91);transform-origin:0 0">ELL PLATE STA 0-1</div>
<div class="t" style="left:204px;top:311.86px;font-size:11px;line-height:12.65px;color:#000;">Administrator</div>
<div class="t" style="left:304px;top:311.86px;font-size:11px;line-height:12.65px;color:#000;">5/20/2017 3:48:...</div>
<div style="left:0px;top:344px;width:1197px;height:1px;background:#6d6d6d"></div>
<div style="left:1px;top:327px;width:18px;height:17px;background:#f0f0f0;border-top:1px solid #fff;border-left:1px solid #fff"></div>
<div style="left:202px;top:327px;width:98px;height:17px;background:#f0f0f0;border:1px solid #fff;border-top-color:#f8f8f8"></div>
<div style="left:301px;top:327px;width:98px;height:17px;background:#f0f0f0;border:1px solid #fff;border-top-color:#f8f8f8"></div>
<div class="t" style="right:701px;top:329.86px;font-size:11px;line-height:12.65px;color:#000;text-align:right;">220</div>
<div class="t" style="right:602px;top:329.86px;font-size:11px;line-height:12.65px;color:#000;text-align:right;">1.00</div>
<div class="t" style="right:503px;top:329.86px;font-size:11px;line-height:12.65px;color:#000;text-align:right;">1.00</div>
<div class="t" style="right:404px;top:329.86px;font-size:11px;line-height:12.65px;color:#000;text-align:right;">1.00</div>
<div class="t" style="right:305px;top:329.86px;font-size:11px;line-height:12.65px;color:#000;text-align:right;">16.07</div>
<div class="t" style="right:206px;top:329.86px;font-size:11px;line-height:12.65px;color:#000;text-align:right;">3536.30</div>
<div class="t" style="right:107px;top:329.86px;font-size:11px;line-height:12.65px;color:#000;text-align:right;">0.00</div>
<div class="t" style="right:8px;top:329.86px;font-size:11px;line-height:12.65px;color:#000;text-align:right;">0.00</div>
<div class="t" style="left:18.2px;top:329.86px;font-size:11px;line-height:12.65px;color:#000;transform:scaleX(0.91);transform-origin:0 0">ELL PLATE STA 1-2</div>
<div class="t" style="left:204px;top:329.86px;font-size:11px;line-height:12.65px;color:#000;">Administrator</div>
<div class="t" style="left:304px;top:329.86px;font-size:11px;line-height:12.65px;color:#000;">5/20/2017 3:48:...</div>
<div style="left:0px;top:362px;width:1197px;height:1px;background:#6d6d6d"></div>
<div style="left:1px;top:345px;width:18px;height:17px;background:#f0f0f0;border-top:1px solid #fff;border-left:1px solid #fff"></div>
<div style="left:202px;top:345px;width:98px;height:17px;background:#f0f0f0;border:1px solid #fff;border-top-color:#f8f8f8"></div>
<div style="left:301px;top:345px;width:98px;height:17px;background:#f0f0f0;border:1px solid #fff;border-top-color:#f8f8f8"></div>
<div class="t" style="right:701px;top:347.86px;font-size:11px;line-height:12.65px;color:#000;text-align:right;">220</div>
<div class="t" style="right:602px;top:347.86px;font-size:11px;line-height:12.65px;color:#000;text-align:right;">1.00</div>
<div class="t" style="right:503px;top:347.86px;font-size:11px;line-height:12.65px;color:#000;text-align:right;">1.00</div>
<div class="t" style="right:404px;top:347.86px;font-size:11px;line-height:12.65px;color:#000;text-align:right;">1.00</div>
<div class="t" style="right:305px;top:347.86px;font-size:11px;line-height:12.65px;color:#000;text-align:right;">16.07</div>
<div class="t" style="right:206px;top:347.86px;font-size:11px;line-height:12.65px;color:#000;text-align:right;">3536.30</div>
<div class="t" style="right:107px;top:347.86px;font-size:11px;line-height:12.65px;color:#000;text-align:right;">25.22</div>
<div class="t" style="right:8px;top:347.86px;font-size:11px;line-height:12.65px;color:#000;text-align:right;">14.85</div>
<div class="t" style="left:18.2px;top:347.86px;font-size:11px;line-height:12.65px;color:#000;transform:scaleX(0.91);transform-origin:0 0">ELL PLATE STA 1-2</div>
<div class="t" style="left:204px;top:347.86px;font-size:11px;line-height:12.65px;color:#000;">Administrator</div>
<div class="t" style="left:304px;top:347.86px;font-size:11px;line-height:12.65px;color:#000;">5/20/2017 3:48:...</div>
<div style="left:0px;top:380px;width:1197px;height:1px;background:#6d6d6d"></div>
<div style="left:1px;top:363px;width:18px;height:17px;background:#f0f0f0;border-top:1px solid #fff;border-left:1px solid #fff"></div>
<div style="left:202px;top:363px;width:98px;height:17px;background:#f0f0f0;border:1px solid #fff;border-top-color:#f8f8f8"></div>
<div style="left:301px;top:363px;width:98px;height:17px;background:#f0f0f0;border:1px solid #fff;border-top-color:#f8f8f8"></div>
<div class="t" style="right:701px;top:365.86px;font-size:11px;line-height:12.65px;color:#000;text-align:right;">230</div>
<div class="t" style="right:602px;top:365.86px;font-size:11px;line-height:12.65px;color:#000;text-align:right;">1.00</div>
<div class="t" style="right:503px;top:365.86px;font-size:11px;line-height:12.65px;color:#000;text-align:right;">1.00</div>
<div class="t" style="right:404px;top:365.86px;font-size:11px;line-height:12.65px;color:#000;text-align:right;">1.00</div>
<div class="t" style="right:305px;top:365.86px;font-size:11px;line-height:12.65px;color:#000;text-align:right;">19.29</div>
<div class="t" style="right:206px;top:365.86px;font-size:11px;line-height:12.65px;color:#000;text-align:right;">4436.45</div>
<div class="t" style="right:107px;top:365.86px;font-size:11px;line-height:12.65px;color:#000;text-align:right;">0.89</div>
<div class="t" style="right:8px;top:365.86px;font-size:11px;line-height:12.65px;color:#000;text-align:right;">123.75</div>
<div class="t" style="left:18.2px;top:365.86px;font-size:11px;line-height:12.65px;color:#000;transform:scaleX(0.91);transform-origin:0 0">ELL PLATE STA 12-13</div>
<div class="t" style="left:204px;top:365.86px;font-size:11px;line-height:12.65px;color:#000;">Administrator</div>
<div class="t" style="left:304px;top:365.86px;font-size:11px;line-height:12.65px;color:#000;">5/20/2017 3:48:...</div>
<div style="left:0px;top:398px;width:1197px;height:1px;background:#6d6d6d"></div>
<div style="left:1px;top:381px;width:18px;height:17px;background:#f0f0f0;border-top:1px solid #fff;border-left:1px solid #fff"></div>
<div style="left:202px;top:381px;width:98px;height:17px;background:#f0f0f0;border:1px solid #fff;border-top-color:#f8f8f8"></div>
<div style="left:301px;top:381px;width:98px;height:17px;background:#f0f0f0;border:1px solid #fff;border-top-color:#f8f8f8"></div>
<div class="t" style="right:701px;top:383.86px;font-size:11px;line-height:12.65px;color:#000;text-align:right;">236</div>
<div class="t" style="right:602px;top:383.86px;font-size:11px;line-height:12.65px;color:#000;text-align:right;">1.00</div>
<div class="t" style="right:503px;top:383.86px;font-size:11px;line-height:12.65px;color:#000;text-align:right;">1.00</div>
<div class="t" style="right:404px;top:383.86px;font-size:11px;line-height:12.65px;color:#000;text-align:right;">1.00</div>
<div class="t" style="right:305px;top:383.86px;font-size:11px;line-height:12.65px;color:#000;text-align:right;">38.58</div>
<div class="t" style="right:206px;top:383.86px;font-size:11px;line-height:12.65px;color:#000;text-align:right;">9104.36</div>
<div class="t" style="right:107px;top:383.86px;font-size:11px;line-height:12.65px;color:#000;text-align:right;">13.59</div>
<div class="t" style="right:8px;top:383.86px;font-size:11px;line-height:12.65px;color:#000;text-align:right;">123.75</div>
<div class="t" style="left:18.2px;top:383.86px;font-size:11px;line-height:12.65px;color:#000;transform:scaleX(0.91);transform-origin:0 0">ELL PLATE STA 12-13</div>
<div class="t" style="left:204px;top:383.86px;font-size:11px;line-height:12.65px;color:#000;">Administrator</div>
<div class="t" style="left:304px;top:383.86px;font-size:11px;line-height:12.65px;color:#000;">5/20/2017 3:48:...</div>
<div style="left:1px;top:21px;width:18px;height:17px;background:#f0f0f0;border-top:1px solid #fff;border-left:1px solid #fff;border-right:1px solid #a0a0a0;border-bottom:1px solid #a0a0a0"></div>
<div style="left:1px;top:39px;width:18px;height:17px;background:#f0f0f0;border-top:1px solid #fff;border-left:1px solid #fff;border-right:1px solid #a0a0a0;border-bottom:1px solid #a0a0a0"></div>
<div style="left:1px;top:57px;width:18px;height:17px;background:#f0f0f0;border-top:1px solid #fff;border-left:1px solid #fff;border-right:1px solid #a0a0a0;border-bottom:1px solid #a0a0a0"></div>
<div style="left:1px;top:75px;width:18px;height:17px;background:#f0f0f0;border-top:1px solid #fff;border-left:1px solid #fff;border-right:1px solid #a0a0a0;border-bottom:1px solid #a0a0a0"></div>
<div style="left:1px;top:93px;width:18px;height:17px;background:#f0f0f0;border-top:1px solid #fff;border-left:1px solid #fff;border-right:1px solid #a0a0a0;border-bottom:1px solid #a0a0a0"></div>
<div style="left:1px;top:111px;width:18px;height:17px;background:#f0f0f0;border-top:1px solid #fff;border-left:1px solid #fff;border-right:1px solid #a0a0a0;border-bottom:1px solid #a0a0a0"></div>
<div style="left:1px;top:129px;width:18px;height:17px;background:#f0f0f0;border-top:1px solid #fff;border-left:1px solid #fff;border-right:1px solid #a0a0a0;border-bottom:1px solid #a0a0a0"></div>
<div style="left:1px;top:147px;width:18px;height:17px;background:#f0f0f0;border-top:1px solid #fff;border-left:1px solid #fff;border-right:1px solid #a0a0a0;border-bottom:1px solid #a0a0a0"></div>
<div style="left:1px;top:165px;width:18px;height:17px;background:#f0f0f0;border-top:1px solid #fff;border-left:1px solid #fff;border-right:1px solid #a0a0a0;border-bottom:1px solid #a0a0a0"></div>
<div style="left:1px;top:183px;width:18px;height:17px;background:#f0f0f0;border-top:1px solid #fff;border-left:1px solid #fff;border-right:1px solid #a0a0a0;border-bottom:1px solid #a0a0a0"></div>
<div style="left:1px;top:201px;width:18px;height:17px;background:#f0f0f0;border-top:1px solid #fff;border-left:1px solid #fff;border-right:1px solid #a0a0a0;border-bottom:1px solid #a0a0a0"></div>
<div style="left:1px;top:219px;width:18px;height:17px;background:#f0f0f0;border-top:1px solid #fff;border-left:1px solid #fff;border-right:1px solid #a0a0a0;border-bottom:1px solid #a0a0a0"></div>
<div style="left:1px;top:237px;width:18px;height:17px;background:#f0f0f0;border-top:1px solid #fff;border-left:1px solid #fff;border-right:1px solid #a0a0a0;border-bottom:1px solid #a0a0a0"></div>
<div style="left:1px;top:255px;width:18px;height:17px;background:#f0f0f0;border-top:1px solid #fff;border-left:1px solid #fff;border-right:1px solid #a0a0a0;border-bottom:1px solid #a0a0a0"></div>
<div class="t" style="left:7px;top:257.86px;font-size:11px;line-height:12.65px;color:#000;">...</div>
<div style="left:1px;top:273px;width:18px;height:17px;background:#f0f0f0;border-top:1px solid #fff;border-left:1px solid #fff;border-right:1px solid #a0a0a0;border-bottom:1px solid #a0a0a0"></div>
<div style="left:1px;top:291px;width:18px;height:17px;background:#f0f0f0;border-top:1px solid #fff;border-left:1px solid #fff;border-right:1px solid #a0a0a0;border-bottom:1px solid #a0a0a0"></div>
<div style="left:1px;top:309px;width:18px;height:17px;background:#f0f0f0;border-top:1px solid #fff;border-left:1px solid #fff;border-right:1px solid #a0a0a0;border-bottom:1px solid #a0a0a0"></div>
<div style="left:1px;top:327px;width:18px;height:17px;background:#f0f0f0;border-top:1px solid #fff;border-left:1px solid #fff;border-right:1px solid #a0a0a0;border-bottom:1px solid #a0a0a0"></div>
<div style="left:1px;top:345px;width:18px;height:17px;background:#f0f0f0;border-top:1px solid #fff;border-left:1px solid #fff;border-right:1px solid #a0a0a0;border-bottom:1px solid #a0a0a0"></div>
<div style="left:1px;top:363px;width:18px;height:17px;background:#f0f0f0;border-top:1px solid #fff;border-left:1px solid #fff;border-right:1px solid #a0a0a0;border-bottom:1px solid #a0a0a0"></div>
<div style="left:1px;top:381px;width:18px;height:17px;background:#f0f0f0;border-top:1px solid #fff;border-left:1px solid #fff;border-right:1px solid #a0a0a0;border-bottom:1px solid #a0a0a0"></div>
<div style="left:1192px;top:255px;width:5px;height:17px;background:#3399ff"></div>
<div style="left:1092px;top:254px;width:100px;height:19px;background:#fff;border:1px solid #3c8fe6"></div>
<div style="left:1097px;top:257px;width:6px;height:13px;background:#3399ff"></div>
<div class="t" style="left:1097px;top:257.86px;font-size:11px;line-height:12.65px;color:#fff;">0</div>
<div style="left:1103px;top:257px;width:1px;height:13px;background:#804010"></div>
<div style="left:0px;top:1px;width:19px;height:17px;background:#f0f0f0;border-top:1px solid #fff;border-left:1px solid #fff;border-right:1px solid #a0a0a0"></div>
<div style="left:19px;top:0px;width:1px;height:393px;background:#6d6d6d"></div>
<div style="left:0px;top:0px;width:1px;height:393px;background:#6d6d6d"></div>
</div>
<div style="left:1204px;top:315px;width:17px;height:393px;background:#f0f0f0"></div>
<div style="left:1205px;top:332px;width:15px;height:108px;background:#cdcdcd"></div>
<svg style="left:1208px;top:320px" width="9" height="6"><path d="M1 5 L4.5 1.5 L8 5" stroke="#606060" stroke-width="2" fill="none"/></svg>
<svg style="left:1208px;top:697px" width="9" height="6"><path d="M1 1 L4.5 4.5 L8 1" stroke="#606060" stroke-width="2" fill="none"/></svg>
<div style="left:7px;top:708px;width:1197px;height:17px;background:#f0f0f0"></div>
<div style="left:144px;top:709px;width:658px;height:15px;background:#cdcdcd"></div>
<svg style="left:12px;top:712px" width="6" height="9"><path d="M5 1 L1.5 4.5 L5 8" stroke="#606060" stroke-width="2" fill="none"/></svg>
<svg style="left:1193px;top:712px" width="6" height="9"><path d="M1 1 L4.5 4.5 L1 8" stroke="#606060" stroke-width="2" fill="none"/></svg>
<div style="left:1204px;top:708px;width:17px;height:17px;background:#c8c8c8"></div>
<div style="left:16px;top:744px;width:2px;height:66px;background:#000"></div>
<div style="left:1210px;top:744px;width:2px;height:66px;background:#000"></div>
<div style="left:16px;top:808px;width:1196px;height:2px;background:#000"></div>
<div style="left:16px;top:744px;width:8px;height:2px;background:#000"></div>
<div style="left:147px;top:744px;width:1045px;height:2px;background:#000"></div>
<div style="left:1201px;top:744px;width:11px;height:2px;background:#000"></div>
<div style="left:1192px;top:741px;width:8px;height:8px;background:#f4f4f4;border:1px solid #a8a8a8"></div>
<div style="left:1194px;top:745px;width:4px;height:1px;background:#000"></div>
<div class="t" style="left:27px;top:733.86px;font-size:11px;line-height:12.65px;color:#000;">Total weight &amp; CoG</div>
<div class="t" style="left:27px;top:753.86px;font-size:11px;line-height:12.65px;color:#000;">Weight [kg]</div>
<div style="left:27px;top:773px;width:100px;height:22px;background:#f0f0f0;border:1px solid #abadb3"></div>
<div class="t" style="right:1107px;top:776.86px;font-size:11px;line-height:12.65px;color:#000;text-align:right;">404234.52</div>
<div class="t" style="left:127px;top:753.86px;font-size:11px;line-height:12.65px;color:#000;">Weight [t]</div>
<div style="left:127px;top:773px;width:100px;height:22px;background:#f0f0f0;border:1px solid #abadb3"></div>
<div class="t" style="right:1007px;top:776.86px;font-size:11px;line-height:12.65px;color:#000;text-align:right;">404</div>
<div class="t" style="left:227px;top:753.86px;font-size:11px;line-height:12.65px;color:#000;">VCG [m]</div>
<div style="left:227px;top:773px;width:100px;height:22px;background:#f0f0f0;border:1px solid #abadb3"></div>
<div class="t" style="right:907px;top:776.86px;font-size:11px;line-height:12.65px;color:#000;text-align:right;">11.36</div>
<div class="t" style="left:327px;top:753.86px;font-size:11px;line-height:12.65px;color:#000;">LCG [m]</div>
<div style="left:327px;top:773px;width:100px;height:22px;background:#f0f0f0;border:1px solid #abadb3"></div>
<div class="t" style="right:807px;top:776.86px;font-size:11px;line-height:12.65px;color:#000;text-align:right;">110.43</div>
<div class="t" style="left:427px;top:753.86px;font-size:11px;line-height:12.65px;color:#000;">TCG [m]</div>
<div style="left:427px;top:773px;width:100px;height:22px;background:#f0f0f0;border:1px solid #abadb3"></div>
<div class="t" style="right:707px;top:776.86px;font-size:11px;line-height:12.65px;color:#000;text-align:right;">0.00</div>
<div class="t" style="left:527px;top:753.86px;font-size:11px;line-height:12.65px;color:#000;">VCG_min [m]</div>
<div style="left:527px;top:773px;width:100px;height:22px;background:#f0f0f0;border:1px solid #abadb3"></div>
<div class="t" style="right:607px;top:776.86px;font-size:11px;line-height:12.65px;color:#000;text-align:right;">-5.00</div>
<div class="t" style="left:627px;top:753.86px;font-size:11px;line-height:12.65px;color:#000;">VCG_max [m]</div>
<div style="left:627px;top:773px;width:100px;height:22px;background:#f0f0f0;border:1px solid #abadb3"></div>
<div class="t" style="right:507px;top:776.86px;font-size:11px;line-height:12.65px;color:#000;text-align:right;">30.22</div>
<div class="t" style="left:727px;top:753.86px;font-size:11px;line-height:12.65px;color:#000;">LCG_min [m]</div>
<div style="left:727px;top:773px;width:100px;height:22px;background:#f0f0f0;border:1px solid #abadb3"></div>
<div class="t" style="right:407px;top:776.86px;font-size:11px;line-height:12.65px;color:#000;text-align:right;">-5.00</div>
<div class="t" style="left:827px;top:753.86px;font-size:11px;line-height:12.65px;color:#000;">LCG_max [m]</div>
<div style="left:827px;top:773px;width:100px;height:22px;background:#f0f0f0;border:1px solid #abadb3"></div>
<div class="t" style="right:307px;top:776.86px;font-size:11px;line-height:12.65px;color:#000;text-align:right;">206.50</div>
<div class="t" style="left:927px;top:753.86px;font-size:11px;line-height:12.65px;color:#000;">TCG_min [m]</div>
<div style="left:927px;top:773px;width:100px;height:22px;background:#f0f0f0;border:1px solid #abadb3"></div>
<div class="t" style="right:207px;top:776.86px;font-size:11px;line-height:12.65px;color:#000;text-align:right;">-5.00</div>
<div class="t" style="left:1027px;top:753.86px;font-size:11px;line-height:12.65px;color:#000;">TCG_max [m]</div>
<div style="left:1027px;top:773px;width:100px;height:22px;background:#f0f0f0;border:1px solid #abadb3"></div>
<div class="t" style="right:107px;top:776.86px;font-size:11px;line-height:12.65px;color:#000;text-align:right;">5.00</div>
<div style="left:7px;top:819px;width:1214px;height:1px;background:#a0a0a0"></div>
<div style="left:7px;top:820px;width:1214px;height:1px;background:#fafafa"></div>
<svg style="left:22px;top:829px" width="10" height="11"><rect x="0" y="0" width="2" height="11" fill="#9a9a9a"/><path d="M9 0 L3 5.5 L9 11 Z" fill="#9a9a9a"/></svg>
<svg style="left:45px;top:829px" width="7" height="11"><path d="M7 0 L1 5.5 L7 11 Z" fill="#9a9a9a"/></svg>
<div style="left:61px;top:824px;width:70px;height:22px;background:#f0f0f0;border:1px solid #dcdcdc;box-shadow:inset 1px 1px 0 #fff,inset -1px -1px 0 #fff"></div>
<div class="t" style="right:1103px;top:827.86px;font-size:11px;line-height:12.65px;color:#7a7a7a;text-align:right;">14</div>
<div style="left:131px;top:824px;width:71px;height:22px;background:#f0f0f0;border:1px solid #acacac;box-shadow:inset 1px 1px 0 #fff,inset -1px -1px 0 #fff"></div>
<div class="t" style="right:1033px;top:827.86px;font-size:11px;line-height:12.65px;color:#000;text-align:right;">63</div>
<svg style="left:208px;top:829px" width="7" height="11"><path d="M0 0 L6 5.5 L0 11 Z" fill="#9a9a9a"/></svg>
<svg style="left:230px;top:829px" width="10" height="11"><path d="M0 0 L6 5.5 L0 11 Z" fill="#9a9a9a"/><rect x="7" y="0" width="2" height="11" fill="#9a9a9a"/></svg>
<div style="left:247px;top:824px;width:806px;height:22px;background:#ffff00;border:1px solid #acacac;box-shadow:inset 1px 1px 0 #fff,inset -1px -1px 0 #fff"></div>
<div class="t" style="left:253px;top:827.79px;font-size:10px;line-height:11.50px;color:#000;">Filter: WgtGrp = '111'</div>
<div style="left:7px;top:820px;width:1px;height:29px;background:#a0a0a0"></div>
<div style="left:8px;top:820px;width:1px;height:28px;background:#fff"></div>
<div style="left:1220px;top:820px;width:1px;height:29px;background:#a0a0a0"></div>
<div style="left:1219px;top:820px;width:1px;height:28px;background:#fafafa"></div>
<div style="left:7px;top:848px;width:1214px;height:1px;background:#f8f6ee"></div>
<div style="left:6px;top:849px;width:1216px;height:1px;background:#5076bd"></div>
<div style="left:6px;top:31px;width:1px;height:819px;background:#5076bd"></div>
<div style="left:1221px;top:31px;width:1px;height:819px;background:#5076bd"></div>
<div style="left:1228px;top:0px;width:1px;height:857px;background:#4a6aa8"></div>
<div style="left:0px;top:856px;width:1229px;height:1px;background:#4a6aa8"></div>
<div style="left:0;top:50px;width:238px;height:225px;background:#f0f0f0;border:1px solid #8c8c8c;border-left:none;box-shadow:inset -1px 1px 0 #fbfbfb, 1px 1px 0 #8f8f8f, 2px 2px 1px rgba(0,0,0,0.22), 3px 3px 2px rgba(0,0,0,0.1)"></div>
<div style="left:27px;top:53px;width:1px;height:219px;background:#e2e2e2"></div>
<div style="left:28px;top:78px;width:208px;height:1px;background:#d7d7d7"></div>
<div style="left:28px;top:217px;width:208px;height:1px;background:#d7d7d7"></div>
<div style="left:28px;top:246px;width:208px;height:1px;background:#d7d7d7"></div>
<div class="t" style="left:32px;top:57.94px;font-size:12px;line-height:13.80px;color:#000;">Grid Display Setting...</div>
<div class="t" style="left:32px;top:86.94px;font-size:12px;line-height:13.80px;color:#000;">Load Setting...</div>
<div class="t" style="left:32px;top:108.94px;font-size:12px;line-height:13.80px;color:#000;">Save Setting</div>
<div class="t" style="left:32px;top:130.94px;font-size:12px;line-height:13.80px;color:#000;">Save Setting As...</div>
<div class="t" style="left:32px;top:152.94px;font-size:12px;line-height:13.80px;color:#000;">Item Settings...</div>
<div class="t" style="left:32px;top:174.94px;font-size:12px;line-height:13.80px;color:#000;">Equipment Import Setting...</div>
<div class="t" style="left:32px;top:196.94px;font-size:12px;line-height:13.80px;color:#000;">Master Item Import Setting...</div>
<div class="t" style="left:32px;top:225.94px;font-size:12px;line-height:13.80px;color:#6d6d6d;">Local Coordinates...</div>
<div style="left:0px;top:250px;width:235px;height:22px;background:#d5e6f6;border:1px solid #7eb4ea;border-left:none"></div>
<div style="left:0px;top:250px;width:22px;height:22px;background:#a9cdec;border:1px solid #3399dd"></div>
<div style="left:27px;top:251px;width:1px;height:20px;background:#c2d8ee"></div>
<svg style="left:5px;top:255px" width="12" height="11"><path d="M1.5 5.5 L4.5 8.5 L10.5 2" stroke="#2a2a2a" stroke-width="2.2" fill="none"/></svg>
<div class="t" style="left:32px;top:254.94px;font-size:12px;line-height:13.80px;color:#000;">Mark Edited Cells</div>
</body></html>
